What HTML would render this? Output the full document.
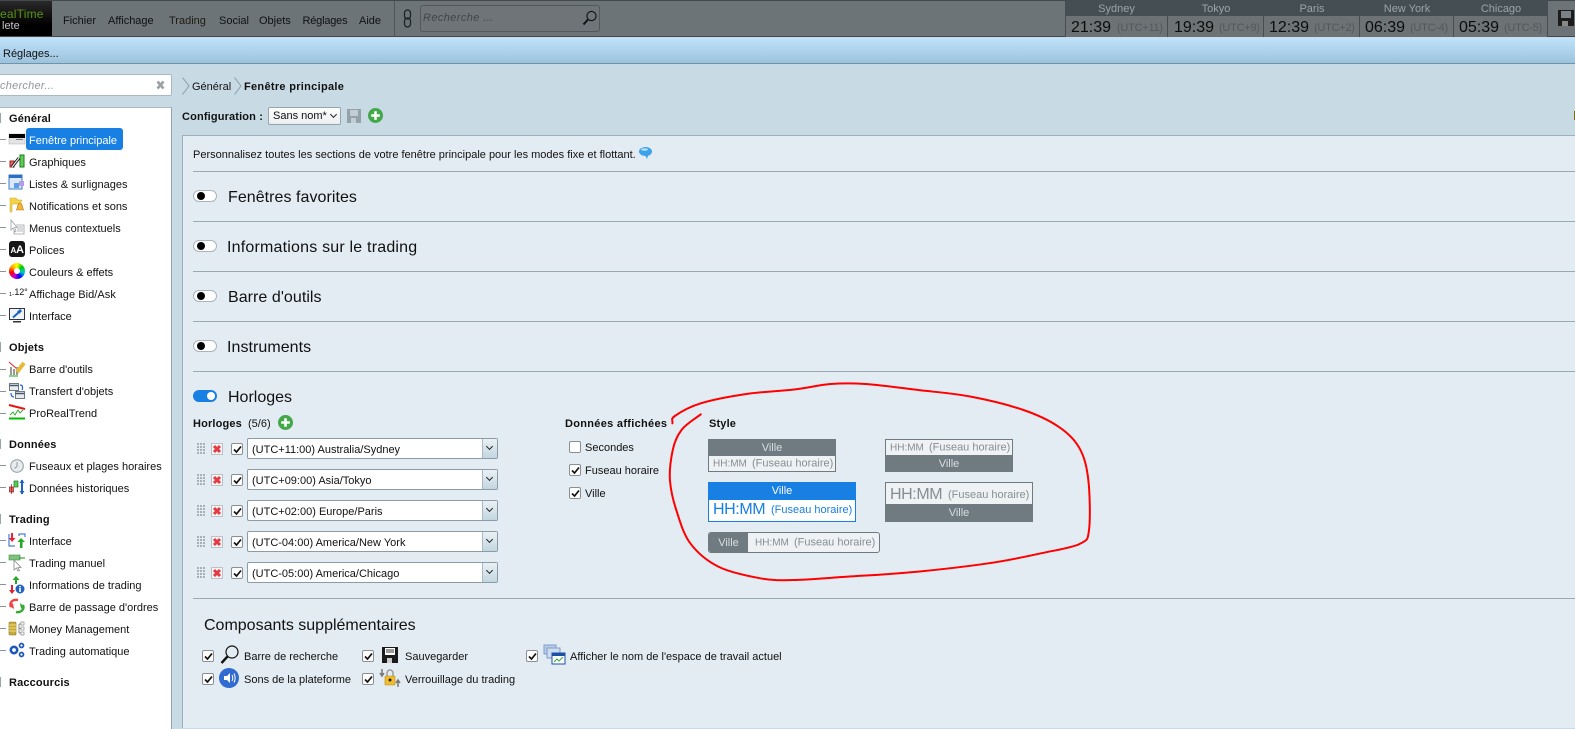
<!DOCTYPE html>
<html lang="fr">
<head>
<meta charset="utf-8">
<style>
html,body{margin:0;padding:0;width:1575px;height:728px;overflow:hidden;background:#c8dae4;font-family:"Liberation Sans",sans-serif;font-size:11px;color:#111}
.a{position:absolute}
.t{position:absolute;white-space:nowrap;transform:translateY(calc(-50% + 1px));line-height:14px}
.b{font-weight:bold;letter-spacing:.15px}
.s{font-size:16px;line-height:20px;color:#111;letter-spacing:.05px;transform:translateY(calc(-50% + 2px))}
svg{position:absolute;overflow:visible}
.sep{position:absolute;left:193px;right:0;height:1px;background:#9aa8b0}
.tg{position:absolute;left:193px;width:22px;height:10px;border:1px solid #a9b4bb;border-radius:6px;background:#fff}
.tg i{position:absolute;left:3px;top:1px;width:8px;height:8px;border-radius:50%;background:#000}
.cb{position:absolute;width:10px;height:10px;border:1px solid #8a8f93;border-radius:2px;background:#fff}
.cb svg{left:1px;top:1px}
.sel{position:absolute;left:247px;width:249px;height:19px;border:1px solid #8b9ca6;border-radius:2px;background:#fff}
.sel u{position:absolute;right:0;top:0;width:14px;height:19px;background:linear-gradient(#e9f1f5,#c3d6e0);border-left:1px solid #a9bac4}
.sel u:after{content:"";position:absolute;left:4px;top:5px;width:4px;height:4px;border-right:1.5px solid #222;border-bottom:1.5px solid #222;transform:rotate(45deg)}
.ck{position:absolute;top:0;height:37px}
.ck b{position:absolute;left:0;right:0;top:0;height:16px;background:#454f53;font-weight:normal;color:#9aa4a8;text-align:center;font-size:11px;line-height:19px}
.ti{position:absolute;font-size:16px;top:19px;line-height:18px;color:#0c0c0c;white-space:nowrap}
.ut{position:absolute;font-size:11px;top:21px;line-height:14px;color:#50595d;white-space:nowrap;letter-spacing:-.25px}
.dash{position:absolute;left:0;width:6px;height:1px;background:#8a9399}
.mk{position:absolute;left:0;width:1px;height:10px;background:#9ba4a9}
.g{position:absolute;left:196px;width:9px;height:13px;margin-top:-1px;background-color:#a6b1b7;background-image:linear-gradient(#e3ecf2 1px,transparent 1px),linear-gradient(90deg,#e3ecf2 1px,transparent 1px);background-size:3px 3px}
.x{position:absolute;left:211px;width:10px;height:10px;background:#f4f4f4;border:1px solid #b9c2c7}
.x svg{left:1px;top:1px}
.box{position:absolute;box-sizing:border-box;border:1px solid #6f7b80;background:#eef2f5;color:#868e92}
.box em{font-style:normal;font-size:10px;margin-right:2px}
.dk{position:absolute;left:0;right:0;background:#6f7b80;color:#d8dfe2;text-align:center}
</style>
</head>
<body>
<!-- top bar -->
<div class="a" style="left:0;top:0;width:1575px;height:37px;background:#6c7478;border-bottom:1px solid #3e4a50;border-top:1px solid #41494d;box-sizing:border-box"></div>
<div class="a" style="left:0;top:1px;width:52px;height:35px;background:linear-gradient(#2a2a2a,#000 70%)"></div>
<div class="t" style="left:0;top:13px;font-size:12px;color:#5a9411;letter-spacing:.2px">ealTime</div>
<div class="t" style="left:2px;top:25px;font-size:11px;color:#c4c4c4">lete</div>
<div class="t" style="left:63px;top:20px">Fichier</div>
<div class="t" style="left:108px;top:20px">Affichage</div>
<div class="t" style="left:169px;top:20px;color:#1d1c10">Trading</div>
<div class="t" style="left:219px;top:20px">Social</div>
<div class="t" style="left:259px;top:20px">Objets</div>
<div class="t" style="left:302.5px;top:20px;letter-spacing:-.2px">Réglages</div>
<div class="t" style="left:359px;top:20px">Aide</div>
<div class="a" style="left:394px;top:1px;width:1px;height:36px;background:#4d575b"></div>
<svg style="left:403px;top:9px" width="10" height="20" viewBox="0 0 10 20" fill="none" stroke="#1d2326" stroke-width="1.3"><rect x="1.5" y="1" width="6" height="9" rx="3"/><rect x="1.5" y="9" width="6" height="9" rx="3"/></svg>
<div class="a" style="left:420px;top:5px;width:178px;height:25px;background:#6e7478;border:1px solid #50595d;border-radius:3px"></div>
<div class="t" style="left:423px;top:17px;font-style:italic;color:#3f474b;letter-spacing:.4px">Recherche ...</div>
<svg style="left:582px;top:10px" width="16" height="16" viewBox="0 0 16 16" fill="none" stroke="#111"><circle cx="9.5" cy="6" r="4.6" stroke-width="1.1"/><path d="M6 9.5L1.5 14.5" stroke-width="2"/></svg>
<!-- clocks -->
<div class="ck" style="left:1066px;width:101px;background:#6d7275"><b>Sydney</b></div>
<div class="ck" style="left:1167px;width:96px;background:#6d7275;border-left:1px solid #454f53"><b>Tokyo</b></div>
<div class="ck" style="left:1263px;width:96px;background:#6d7275;border-left:1px solid #454f53"><b>Paris</b></div>
<div class="ck" style="left:1359px;width:94px;background:#6d7275;border-left:1px solid #454f53"><b>New York</b></div>
<div class="ck" style="left:1453px;width:94px;background:#6d7275;border-left:1px solid #454f53"><b>Chicago</b></div>
<div class="a" style="left:1065px;top:1px;width:1px;height:36px;background:#454f53"></div>
<div class="a" style="left:1547px;top:1px;width:1px;height:36px;background:#454f53"></div>
<div class="ti" style="left:1071px">21:39</div><div class="ut" style="left:1117px">(UTC+11)</div>
<div class="ti" style="left:1174px">19:39</div><div class="ut" style="left:1219px">(UTC+9)</div>
<div class="ti" style="left:1269px">12:39</div><div class="ut" style="left:1314px">(UTC+2)</div>
<div class="ti" style="left:1365px">06:39</div><div class="ut" style="left:1410px">(UTC-4)</div>
<div class="ti" style="left:1459px">05:39</div><div class="ut" style="left:1504px">(UTC-5)</div>
<svg style="left:1558px;top:10px" width="17" height="16" viewBox="0 0 17 16"><path d="M0 0H16V16H0Z" fill="#1c1c1c"/><rect x="3" y="1" width="10" height="7" fill="#7c8285"/><rect x="4" y="11" width="6" height="5" fill="#888"/></svg>
<!-- blue bar -->
<div class="a" style="left:0;top:38px;width:1575px;height:25px;background:linear-gradient(#c0e2fb,#9dc3dc);border-bottom:1px solid #6e95ad"></div>
<div class="t" style="left:3px;top:53px">Réglages...</div>
<!-- sidebar search -->
<div class="a" style="left:-3px;top:74px;width:173px;height:20px;background:#fff;border:1px solid #a9b9c3;border-radius:2px"></div>
<div class="t" style="left:0;top:85px;font-style:italic;color:#8f979b;letter-spacing:.25px">chercher...</div>
<svg style="left:156px;top:80px" width="9" height="10" viewBox="0 0 9 10"><path d="M1.5 1.5L7.5 8.5M7.5 1.5L1.5 8.5" stroke="#9aa0a4" stroke-width="2.6"/></svg>
<!-- sidebar -->
<div class="a" style="left:0;top:107px;width:171px;height:621px;background:#fff;border-right:1px solid #8fa3b0;border-top:1px solid #a9bac4;box-sizing:content-box"></div>
<div class="mk" style="top:113px"></div><div class="t b" style="left:9px;top:118px">Général</div>
<div class="a" style="left:26px;top:128px;width:97px;height:22px;background:#187fe3;border-radius:3px"></div>
<div class="t" style="left:29px;top:140px;color:#fff">Fenêtre principale</div>
<div class="t" style="left:29px;top:162px">Graphiques</div>
<div class="t" style="left:29px;top:184px">Listes &amp; surlignages</div>
<div class="t" style="left:29px;top:206px">Notifications et sons</div>
<div class="t" style="left:29px;top:228px">Menus contextuels</div>
<div class="t" style="left:29px;top:250px">Polices</div>
<div class="t" style="left:29px;top:272px">Couleurs &amp; effets</div>
<div class="t" style="left:29px;top:294px;letter-spacing:.05px">Affichage Bid/Ask</div>
<div class="t" style="left:29px;top:316px">Interface</div>
<div class="mk" style="top:342px"></div><div class="t b" style="left:9px;top:347px">Objets</div>
<div class="t" style="left:29px;top:369px">Barre d'outils</div>
<div class="t" style="left:29px;top:391px">Transfert d'objets</div>
<div class="t" style="left:29px;top:413px">ProRealTrend</div>
<div class="mk" style="top:439px"></div><div class="t b" style="left:9px;top:444px">Données</div>
<div class="t" style="left:29px;top:466px">Fuseaux et plages horaires</div>
<div class="t" style="left:29px;top:488px">Données historiques</div>
<div class="mk" style="top:514px"></div><div class="t b" style="left:9px;top:519px">Trading</div>
<div class="t" style="left:29px;top:541px">Interface</div>
<div class="t" style="left:29px;top:563px">Trading manuel</div>
<div class="t" style="left:29px;top:585px">Informations de trading</div>
<div class="t" style="left:29px;top:607px">Barre de passage d'ordres</div>
<div class="t" style="left:29px;top:629px">Money Management</div>
<div class="t" style="left:29px;top:651px">Trading automatique</div>
<div class="mk" style="top:677px"></div><div class="t b" style="left:9px;top:682px">Raccourcis</div>
<div class="dash" style="top:139px"></div><div class="dash" style="top:161px"></div><div class="dash" style="top:183px"></div><div class="dash" style="top:205px"></div><div class="dash" style="top:227px"></div><div class="dash" style="top:249px"></div><div class="dash" style="top:271px"></div><div class="dash" style="top:293px"></div><div class="dash" style="top:315px"></div><div class="dash" style="top:369px"></div><div class="dash" style="top:391px"></div><div class="dash" style="top:413px"></div><div class="dash" style="top:465px"></div><div class="dash" style="top:487px"></div><div class="dash" style="top:540px"></div><div class="dash" style="top:562px"></div><div class="dash" style="top:584px"></div><div class="dash" style="top:606px"></div><div class="dash" style="top:628px"></div><div class="dash" style="top:650px"></div>
<!-- sidebar icons -->
<svg style="left:9px;top:134px" width="16" height="10" viewBox="0 0 16 10"><rect width="16" height="10" fill="#e4e4e4" stroke="#aaa" stroke-width=".5"/><rect width="16" height="4" fill="#000"/><rect x="7" y="5" width="7" height="1" fill="#777"/></svg>
<svg style="left:9px;top:153px" width="16" height="16" viewBox="0 0 16 16"><rect x="11" y="2" width="4" height="12" fill="#5fcf55" stroke="#1a7a1a"/><rect x="1" y="8" width="4" height="6" fill="#e66" stroke="#922"/><path d="M3 14L10 5" stroke="#111" stroke-width="3"/><path d="M3 14L10 5" stroke="#eee" stroke-width="1.2"/></svg>
<svg style="left:9px;top:175px" width="16" height="16" viewBox="0 0 16 16"><rect x="0" y="0" width="13" height="14" fill="#dbe8f8" stroke="#3a7ac8"/><rect x="0" y="0" width="13" height="3" fill="#2a6fc6"/><rect x="5" y="8" width="5" height="5" fill="#5aa0e6"/><rect x="10" y="6" width="5" height="5" fill="#b79be6"/></svg>
<svg style="left:9px;top:197px" width="16" height="16" viewBox="0 0 16 16"><path d="M1 1H7L9 3H13L11 7H3V15H1Z" fill="#f4d34a" stroke="#c9a52b" stroke-width=".5"/><path d="M11 6C8 6 9 12 7 13H15C13 12 14 6 11 6Z" fill="#f5b53a" stroke="#b57a10" stroke-width=".6"/></svg>
<svg style="left:10px;top:220px" width="15" height="16" viewBox="0 0 15 16" fill="none" stroke="#9aa0a4" stroke-width=".8"><path d="M1 0V10L3 8L5 12L6 11L4.5 7.5H7Z" fill="#fff"/><path d="M6 5H14V14H4V11"/><path d="M7 7H13M7 9H13M7 11H13"/></svg>
<svg style="left:9px;top:241px" width="16" height="16" viewBox="0 0 16 16"><rect width="16" height="16" rx="3" fill="#161616"/><text x="1.5" y="12" font-size="8" font-weight="bold" fill="#fff" font-family="Liberation Sans">A</text><text x="7" y="12" font-size="11" font-weight="bold" fill="#fff" font-family="Liberation Sans">A</text></svg>
<div class="a" style="left:9px;top:263px;width:16px;height:16px;border-radius:50%;background:conic-gradient(#ff0,#0c0,#0cc,#00f,#c0c,#f00,#fa0,#ff0)"></div>
<div class="a" style="left:14px;top:268px;width:6px;height:6px;border-radius:50%;background:#fff"></div>
<div class="t" style="left:9px;top:291px;font-size:9px;letter-spacing:-.1px">₁.12°</div>
<svg style="left:9px;top:308px" width="16" height="15" viewBox="0 0 16 15"><rect x=".5" y=".5" width="15" height="11" fill="#eef3f8" stroke="#334"/><rect x="4" y="13" width="8" height="1.5" fill="#333"/><path d="M4 9.5L9 5" stroke="#1b63b8" stroke-width="2"/><path d="M9 5L12 2" stroke="#1b63b8" stroke-width="3"/></svg>
<svg style="left:9px;top:361px" width="16" height="16" viewBox="0 0 16 16"><path d="M0 1L8 8" stroke="#d22"/><path d="M2 6V14M5 8V14M8 6V14" stroke="#999" stroke-width="2"/><path d="M8 11L15 2" stroke="#e7b93a" stroke-width="4"/><path d="M0 15H9" stroke="#1a1"/></svg>
<svg style="left:9px;top:383px" width="16" height="16" viewBox="0 0 16 16" fill="#e8ecef" stroke="#4a5a6a" stroke-width=".8"><rect x=".5" y=".5" width="9" height="7"/><rect x="6.5" y="8.5" width="9" height="7"/><path d="M.5 2.5H9.5M6.5 10.5H15.5" stroke-width="1.6"/><path d="M11 2C14 2 14 5 13 7M2 10C2 13 3 14 5 14" stroke="#1b63c8" fill="none" stroke-width="1.2"/></svg>
<svg style="left:9px;top:405px" width="16" height="15" viewBox="0 0 16 15" fill="none"><path d="M0 0L16 4" stroke="#e11" stroke-width="2"/><path d="M1 10L4 7L6 10L9 5L11 8L14 5" stroke="#3a3"/><path d="M0 13.5H16" stroke="#0b0" stroke-width="2"/></svg>
<svg style="left:10px;top:459px" width="14" height="14" viewBox="0 0 14 14" fill="#e8ecee" stroke="#8f999f"><circle cx="7" cy="7" r="6.3"/><path d="M7 3V7.5L4.5 9.5" fill="none"/></svg>
<svg style="left:9px;top:479px" width="16" height="16" viewBox="0 0 16 16"><rect x="0.5" y="8" width="4" height="5" fill="#e66" stroke="#822" stroke-width=".7"/><path d="M2.5 5V15" stroke="#822" stroke-width=".7"/><rect x="5" y="2" width="4" height="6" fill="#5c5" stroke="#272" stroke-width=".7"/><path d="M13 1V15" stroke="#1b63c8" stroke-width="2"/><path d="M10.5 4L13 0.5L15.5 4ZM10.5 12L13 15.5L15.5 12Z" fill="#1b63c8"/></svg>
<svg style="left:9px;top:533px" width="16" height="16" viewBox="0 0 16 16"><path d="M0 1V13H6M10 3V1H16V4" fill="none" stroke="#1b63c8"/><path d="M4 0V5H6.5L3 9L0 5H2V0Z" fill="#e23"/><path d="M11 15V9H8.5L12 5L16 9H13.5V15Z" fill="#2a2"/></svg>
<svg style="left:9px;top:555px" width="16" height="16" viewBox="0 0 16 16"><rect x="0" y="0" width="11" height="5" fill="#7cc47a" stroke="#4a8a4a" stroke-width=".6"/><path d="M10 3H16" stroke="#1a8a1a"/><path d="M5 5V15L7.5 13L9 16L10.5 15.5L9 12.5H12Z" fill="#fff" stroke="#888" stroke-width=".8"/></svg>
<svg style="left:9px;top:576px" width="16" height="18" viewBox="0 0 16 18"><path d="M6 8V4H3.5L7 0L10.5 4H8V8Z" fill="#2a2"/><path d="M2 9V14H0L3 18L6 14H4V9Z" fill="#d23"/><circle cx="11" cy="13" r="4.5" fill="#1f63c0"/><rect x="10.2" y="12" width="1.6" height="4" fill="#fff"/><rect x="10.2" y="10" width="1.6" height="1.4" fill="#fff"/></svg>
<svg style="left:9px;top:598px" width="16" height="16" viewBox="0 0 16 16" fill="none"><path d="M2 9C0 4 4 1 9 2" stroke="#e44" stroke-width="2.4"/><path d="M0 8L5 11L4 5Z" fill="#e44"/><path d="M14 7C16 12 11 15 7 14" stroke="#3a3" stroke-width="2.4"/><path d="M15 8L11 5L12 11Z" fill="#3a3"/></svg>
<svg style="left:9px;top:621px" width="16" height="15" viewBox="0 0 16 15"><rect x="0" y="1" width="7" height="13" rx="1" fill="#c9a93a" stroke="#8a7420" stroke-width=".6"/><path d="M0 4H7M0 7H7M0 10H7" stroke="#f0de80"/><path d="M10 3V12M10 3H12M10 7.5H12M10 12H12" stroke="#888" fill="none"/><rect x="12" y="1" width="3" height="3" fill="#fff" stroke="#888" stroke-width=".7"/><rect x="12" y="6" width="3" height="3" fill="#fff" stroke="#888" stroke-width=".7"/><rect x="12" y="11" width="3" height="3" fill="#fff" stroke="#888" stroke-width=".7"/></svg>
<svg style="left:9px;top:642px" width="16" height="16" viewBox="0 0 16 16" fill="none"><circle cx="5" cy="8" r="3.2" stroke="#1b58b8" stroke-width="2.6"/><circle cx="12.5" cy="3.5" r="2" stroke="#1b58b8" stroke-width="1.7"/><circle cx="12.5" cy="12.5" r="2" stroke="#1b58b8" stroke-width="1.7"/></svg>
<!-- breadcrumb -->
<svg style="left:182px;top:77px" width="8" height="18" viewBox="0 0 8 18" fill="none"><path d="M0.5 0.5L7 9L0.5 17.5" stroke="#8b9ca6"/></svg>
<div class="t" style="left:192px;top:86px">Général</div>
<svg style="left:234px;top:77px" width="8" height="18" viewBox="0 0 8 18" fill="none"><path d="M0.5 0.5L7 9L0.5 17.5" stroke="#8b9ca6"/></svg>
<div class="t b" style="left:244px;top:86px;letter-spacing:.3px">Fenêtre principale</div>
<!-- configuration -->
<div class="t b" style="left:182px;top:116px">Configuration :</div>
<div class="a" style="left:268px;top:107px;width:71px;height:16px;background:linear-gradient(#fdfdfd,#eceff1);border:1px solid #97a4ac;border-radius:2px"></div>
<div class="t" style="left:273px;top:115px">Sans nom*</div>
<div class="a" style="left:331px;top:112px;width:4px;height:4px;border-right:1.5px solid #222;border-bottom:1.5px solid #222;transform:rotate(45deg)"></div>
<svg style="left:347px;top:109px" width="14" height="14" viewBox="0 0 14 14"><path d="M0 0H14V14H0Z" fill="#95a1a8"/><rect x="3" y="1" width="8" height="6" fill="#c3ced4"/><rect x="4" y="9" width="5" height="5" fill="#c3ced4"/></svg>
<svg style="left:368px;top:108px" width="15" height="15" viewBox="0 0 15 15"><circle cx="7.5" cy="7.5" r="7.5" fill="#43a84a"/><path d="M7.5 3.2V11.8M3.2 7.5H11.8" stroke="#fff" stroke-width="2.6"/></svg>
<div class="a" style="left:1574px;top:111px;width:1px;height:9px;background:#7a6a20"></div>
<!-- panel -->
<div class="a" style="left:182px;top:135px;width:1393px;height:593px;background:#e3ecf2;border-left:1px solid #9fb0ba;border-top:1px solid #9fb0ba;box-sizing:border-box"></div>
<div class="t" style="left:193px;top:154px;font-size:11px">Personnalisez toutes les sections de votre fenêtre principale pour les modes fixe et flottant.</div>
<svg style="left:639px;top:147px" width="13" height="13" viewBox="0 0 13 13"><path d="M6.5 0C10 0 13 1.8 13 4.5C13 7 10.5 8.5 9 8.8L8 12L6.5 9C3 9 0 7 0 4.5C0 1.8 3 0 6.5 0Z" fill="#3ca3ea"/><ellipse cx="5.5" cy="2.5" rx="3.5" ry="1.3" fill="#b8e2fa"/></svg>
<div class="sep" style="top:171px"></div><div class="sep" style="top:221px"></div><div class="sep" style="top:271px"></div><div class="sep" style="top:321px"></div><div class="sep" style="top:371px"></div><div class="sep" style="top:598px"></div>
<div class="tg" style="top:190px"><i></i></div><div class="t s" style="left:228px;top:196px">Fenêtres favorites</div>
<div class="tg" style="top:240px"><i></i></div><div class="t s" style="left:227px;top:246px;letter-spacing:.2px">Informations sur le trading</div>
<div class="tg" style="top:290px"><i></i></div><div class="t s" style="left:228px;top:296px">Barre d'outils</div>
<div class="tg" style="top:340px"><i></i></div><div class="t s" style="left:227px;top:346px">Instruments</div>
<div class="a" style="left:193px;top:390px;width:24px;height:12px;border-radius:6px;background:#187fe3"></div>
<div class="a" style="left:207px;top:392px;width:8px;height:8px;border-radius:50%;background:#fff"></div>
<div class="t s" style="left:228px;top:396px;letter-spacing:0">Horloges</div>
<!-- horloges -->
<div class="t b" style="left:193px;top:423px">Horloges</div>
<div class="t" style="left:248px;top:423px">(5/6)</div>
<svg style="left:278px;top:415px" width="15" height="15" viewBox="0 0 15 15"><circle cx="7.5" cy="7.5" r="7.5" fill="#43a84a"/><path d="M7.5 3.2V11.8M3.2 7.5H11.8" stroke="#fff" stroke-width="2.6"/></svg>

<div class="g" style="top:443px"></div><div class="x" style="top:443px"><svg width="8" height="8" viewBox="0 0 8 8"><path d="M1 1L7 7M7 1L1 7" stroke="#e23b45" stroke-width="3"/></svg></div>
<div class="cb" style="left:231px;top:443px"><svg width="9" height="9" viewBox="0 0 9 9"><path d="M1 4.5L3.5 7L8 1.5" fill="none" stroke="#111" stroke-width="1.7"/></svg></div>
<div class="sel" style="top:438px"><u></u></div><div class="t" style="left:252px;top:449px">(UTC+11:00) Australia/Sydney</div>

<div class="g" style="top:474px"></div><div class="x" style="top:474px"><svg width="8" height="8" viewBox="0 0 8 8"><path d="M1 1L7 7M7 1L1 7" stroke="#e23b45" stroke-width="3"/></svg></div>
<div class="cb" style="left:231px;top:474px"><svg width="9" height="9" viewBox="0 0 9 9"><path d="M1 4.5L3.5 7L8 1.5" fill="none" stroke="#111" stroke-width="1.7"/></svg></div>
<div class="sel" style="top:469px"><u></u></div><div class="t" style="left:252px;top:480px">(UTC+09:00) Asia/Tokyo</div>

<div class="g" style="top:505px"></div><div class="x" style="top:505px"><svg width="8" height="8" viewBox="0 0 8 8"><path d="M1 1L7 7M7 1L1 7" stroke="#e23b45" stroke-width="3"/></svg></div>
<div class="cb" style="left:231px;top:505px"><svg width="9" height="9" viewBox="0 0 9 9"><path d="M1 4.5L3.5 7L8 1.5" fill="none" stroke="#111" stroke-width="1.7"/></svg></div>
<div class="sel" style="top:500px"><u></u></div><div class="t" style="left:252px;top:511px">(UTC+02:00) Europe/Paris</div>

<div class="g" style="top:536px"></div><div class="x" style="top:536px"><svg width="8" height="8" viewBox="0 0 8 8"><path d="M1 1L7 7M7 1L1 7" stroke="#e23b45" stroke-width="3"/></svg></div>
<div class="cb" style="left:231px;top:536px"><svg width="9" height="9" viewBox="0 0 9 9"><path d="M1 4.5L3.5 7L8 1.5" fill="none" stroke="#111" stroke-width="1.7"/></svg></div>
<div class="sel" style="top:531px"><u></u></div><div class="t" style="left:252px;top:542px">(UTC-04:00) America/New York</div>

<div class="g" style="top:567px"></div><div class="x" style="top:567px"><svg width="8" height="8" viewBox="0 0 8 8"><path d="M1 1L7 7M7 1L1 7" stroke="#e23b45" stroke-width="3"/></svg></div>
<div class="cb" style="left:231px;top:567px"><svg width="9" height="9" viewBox="0 0 9 9"><path d="M1 4.5L3.5 7L8 1.5" fill="none" stroke="#111" stroke-width="1.7"/></svg></div>
<div class="sel" style="top:562px"><u></u></div><div class="t" style="left:252px;top:573px">(UTC-05:00) America/Chicago</div>
<!-- données -->
<div class="t b" style="left:565px;top:423px;letter-spacing:.3px">Données affichées</div>
<div class="cb" style="left:569px;top:441px"></div><div class="t" style="left:585px;top:447px">Secondes</div>
<div class="cb" style="left:569px;top:464px"><svg width="9" height="9" viewBox="0 0 9 9"><path d="M1 4.5L3.5 7L8 1.5" fill="none" stroke="#111" stroke-width="1.7"/></svg></div><div class="t" style="left:585px;top:470px">Fuseau horaire</div>
<div class="cb" style="left:569px;top:487px"><svg width="9" height="9" viewBox="0 0 9 9"><path d="M1 4.5L3.5 7L8 1.5" fill="none" stroke="#111" stroke-width="1.7"/></svg></div><div class="t" style="left:585px;top:493px">Ville</div>
<!-- style -->
<div class="t b" style="left:709px;top:423px">Style</div>
<div class="box" style="left:708px;top:439px;width:128px;height:33px"><div class="dk" style="top:-1px;left:-1px;right:-1px;height:17px;line-height:18px">Ville</div><div class="t" style="left:4px;top:23px"><em>HH:MM</em> (Fuseau horaire)</div></div>
<div class="box" style="left:885px;top:439px;width:128px;height:33px"><div class="t" style="left:4px;top:7px"><em>HH:MM</em> (Fuseau horaire)</div><div class="dk" style="bottom:-1px;left:-1px;right:-1px;height:17px;line-height:18px">Ville</div></div>
<div class="box" style="left:708px;top:482px;width:148px;height:40px;border-color:#187fe3;background:#fff;color:#187fe3"><div class="dk" style="top:-1px;left:-1px;right:-1px;height:18px;line-height:18px;background:#187fe3;color:#fff">Ville</div><div class="t" style="left:4px;top:26px;font-size:16px;line-height:20px;letter-spacing:-.4px">HH:MM</div><div class="t" style="left:62px;top:26px">(Fuseau horaire)</div></div>
<div class="box" style="left:885px;top:482px;width:148px;height:40px"><div class="t" style="left:4px;top:11px;font-size:16px;line-height:20px;letter-spacing:-.4px">HH:MM</div><div class="t" style="left:62px;top:11px">(Fuseau horaire)</div><div class="dk" style="bottom:-1px;left:-1px;right:-1px;height:18px;line-height:18px">Ville</div></div>
<div class="box" style="left:708px;top:532px;width:172px;height:21px;border-radius:3px;overflow:hidden"><div class="dk" style="top:0;bottom:0;left:0;right:auto;width:39px;line-height:20px">Ville</div><div class="t" style="left:46px;top:9px"><em>HH:MM</em> (Fuseau horaire)</div></div>
<!-- composants -->
<div class="t s" style="left:204px;top:624px;font-size:16px;letter-spacing:0">Composants supplémentaires</div>
<div class="cb" style="left:202px;top:650px"><svg width="9" height="9" viewBox="0 0 9 9"><path d="M1 4.5L3.5 7L8 1.5" fill="none" stroke="#111" stroke-width="1.7"/></svg></div>
<svg style="left:220px;top:645px" width="19" height="19" viewBox="0 0 19 19" fill="none" stroke="#111"><circle cx="12" cy="7" r="6" stroke-width="1.2"/><path d="M7.5 11.5L1.5 18" stroke-width="2.4"/></svg>
<div class="t" style="left:244px;top:656px">Barre de recherche</div>
<div class="cb" style="left:362px;top:650px"><svg width="9" height="9" viewBox="0 0 9 9"><path d="M1 4.5L3.5 7L8 1.5" fill="none" stroke="#111" stroke-width="1.7"/></svg></div>
<svg style="left:382px;top:647px" width="16" height="16" viewBox="0 0 16 16"><path d="M0 0H16V16H0Z" fill="#1a1a1a"/><rect x="3" y="1" width="10" height="7" fill="#fff"/><path d="M4 3H12M4 5H12" stroke="#333"/><rect x="5" y="11" width="5" height="5" fill="#ccc"/></svg>
<div class="t" style="left:405px;top:656px">Sauvegarder</div>
<div class="cb" style="left:526px;top:650px"><svg width="9" height="9" viewBox="0 0 9 9"><path d="M1 4.5L3.5 7L8 1.5" fill="none" stroke="#111" stroke-width="1.7"/></svg></div>
<svg style="left:544px;top:645px" width="22" height="20" viewBox="0 0 22 20"><rect x="0" y="0" width="12" height="9" fill="#b9cdea" stroke="#7d9cc8"/><rect x="3" y="3" width="13" height="10" fill="#cddcf0" stroke="#7d9cc8"/><rect x="8" y="8" width="13" height="11" fill="#fff" stroke="#1b4fa8"/><rect x="8" y="8" width="13" height="3" fill="#1b4fa8"/><path d="M10 17L13 14L15 16L19 12" stroke="#3a3" fill="none"/></svg>
<div class="t" style="left:570px;top:656px">Afficher le nom de l'espace de travail actuel</div>
<div class="cb" style="left:202px;top:673px"><svg width="9" height="9" viewBox="0 0 9 9"><path d="M1 4.5L3.5 7L8 1.5" fill="none" stroke="#111" stroke-width="1.7"/></svg></div>
<svg style="left:219px;top:668px" width="20" height="20" viewBox="0 0 20 20"><circle cx="10" cy="10" r="10" fill="#2f6bd0"/><path d="M5 8H8L11 5V15L8 12H5Z" fill="#fff"/><path d="M13 7C14 9 14 11 13 13M15 5.5C16.5 8.5 16.5 11.5 15 14.5" stroke="#fff" fill="none"/></svg>
<div class="t" style="left:244px;top:679px">Sons de la plateforme</div>
<div class="cb" style="left:362px;top:673px"><svg width="9" height="9" viewBox="0 0 9 9"><path d="M1 4.5L3.5 7L8 1.5" fill="none" stroke="#111" stroke-width="1.7"/></svg></div>
<svg style="left:379px;top:669px" width="22" height="19" viewBox="0 0 22 19"><path d="M3 0V6M1 4L3 7L5 4" stroke="#777" fill="none" stroke-width="1.5"/><path d="M8 7V4A3 3 0 0 1 14 4V7" stroke="#999" fill="none" stroke-width="1.5"/><rect x="6" y="7" width="10" height="9" rx="1" fill="#f3bd2a" stroke="#b58a10" stroke-width=".6"/><circle cx="11" cy="11" r="1.5" fill="#222"/><path d="M19 18V12M17 14L19 11L21 14" stroke="#777" fill="none" stroke-width="1.5"/></svg>
<div class="t" style="left:405px;top:679px">Verrouillage du trading</div>
<!-- red annotation -->
<svg style="left:0;top:0;pointer-events:none" width="1575" height="728" viewBox="0 0 1575 728"><g transform="translate(550 370) scale(.3507 .3333)"><path vector-effect="non-scaling-stroke" fill="none" stroke="#f00" stroke-width="2" stroke-linecap="round" d="M349 160C351 150 342.5 148 356 138C369.5 128 396 111 430 100C464 89 515 79 560 72C605 65 660 63 700 58C740 53 767 44.7 800 42C833 39.3 858 39 900 42C942 45 1000 53.7 1050 60C1100 66.3 1150 70 1200 80C1250 90 1308 105 1350 120C1392 135 1423 150.8 1450 170C1477 189 1496 208 1510 235C1524 262 1530.5 289 1535 330C1539.5 371 1541 448 1537 480C1533 512 1533 510 1510 522C1487 534 1443 540 1400 550C1357 560 1308 571 1250 580C1192 589 1117 598 1050 605C983 612 908 616 850 620C792 624 742 629 700 630C658 631 637 632 600 625C563 618 513 607.5 480 590C447 572.5 420 548 400 520C380 492 370 452 360 420C350 388 344 360 342 330C340 300 345 265 350 240C355 215 362 198 375 180C388 162 410 149 430 133"/></g></svg>
</body>
</html>
